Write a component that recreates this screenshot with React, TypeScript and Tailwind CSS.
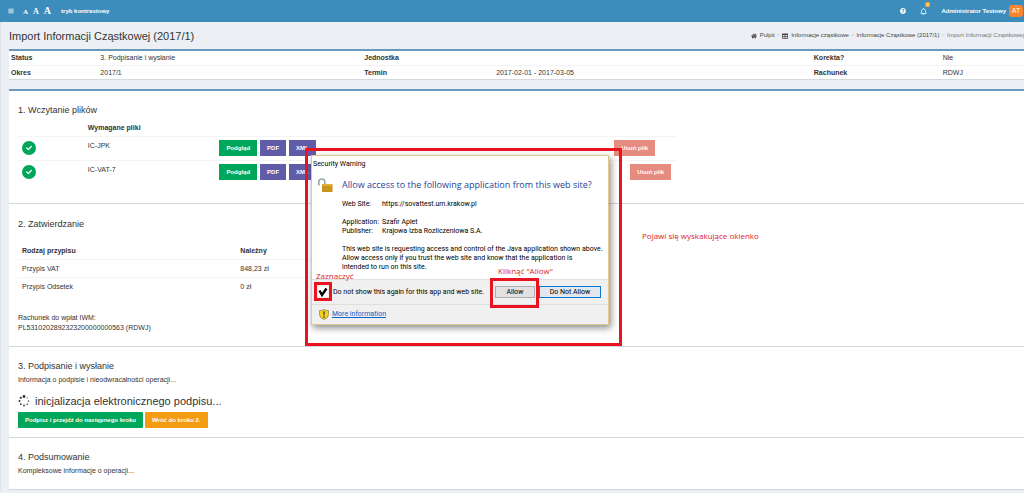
import type { ReactNode } from "react";
import { FaBars, FaCheck, FaHome, FaQuestionCircle, FaRegBell, FaTable } from "react-icons/fa";

const summary = [
   ["Status", "3. Podpisanie i wysłanie", "Jednostka", "", "Korekta?", "Nie"],
   ["Okres", "2017/1", "Termin", "2017-02-01 - 2017-03-05", "Rachunek", "RDWJ"],
];

const files = [
   { name: "IC-JPK", remove: "pl-1" },
   { name: "IC-VAT-7", remove: "pl-5" },
];

const charges = [
   { name: "Przypis VAT", amount: "848,23 zł" },
   { name: "Przypis Odsetek", amount: "0 zł" },
];

const Header = () => (
   <header className="flex h-[22px] items-center justify-between bg-[#3c8dbc] pr-[1px] pl-2 text-[6px] font-bold text-white">
      <div className="flex items-center">
         <button aria-label="Menu">
            <FaBars className="size-[6px]" />
         </button>
         <div className="ml-[9px] flex items-baseline gap-[5px] font-['Liberation_Serif',serif]">
            <button className="text-[7px] leading-[12px]">A</button>
            <button className="text-[8px] leading-[12px]">A</button>
            <button className="text-[10px] leading-[12px]">A</button>
         </div>
         <a href="#" className="ml-[10px]">
            tryb kontrastowy
         </a>
      </div>

      <div className="flex items-center">
         <button aria-label="Pomoc">
            <FaQuestionCircle className="size-[6px]" />
         </button>
         <button aria-label="Powiadomienia" className="relative ml-[14px]">
            <FaRegBell className="size-[7px]" />
            <span className="absolute -top-[6px] left-[5px] h-[5px] w-[5px] rounded-[1px] bg-[#f39c12] text-center text-[4px] leading-[5px]">
               6
            </span>
         </button>
         <a href="#" className="ml-[14px] flex items-center gap-[3px]">
            Administrator Testowy
            <span className="h-3 w-[14px] rounded-[3px] bg-[#f9842c] text-center text-[7px] leading-3 font-normal">AT</span>
         </a>
      </div>
   </header>
);

const Breadcrumb = () => (
   <nav className="flex items-center text-[6px] whitespace-nowrap text-[#444]">
      <a href="#" className="flex items-center gap-[3px]">
         <FaHome className="size-[6px]" /> Pulpit
      </a>
      <span className="px-[2px] text-[#ccc]">&gt;</span>
      <a href="#" className="flex items-center gap-[3px]">
         <FaTable className="size-[6px]" /> Informacje cząstkowe
      </a>
      <span className="px-[2px] text-[#ccc]">&gt;</span>
      <a href="#">Informacje Cząstkowe (2017/1)</a>
      <span className="px-[2px] text-[#ccc]">&gt;</span>
      <span className="text-[#777]">Import Informacji Cząstkowej</span>
   </nav>
);

const Button = ({ color, children }: { color: string; children: ReactNode }) => (
   <button className={`h-4 px-[7px] text-[6px] leading-4 font-bold text-white ${color}`}>{children}</button>
);

const Section = ({ title, className, children }: { title: string; className: string; children: ReactNode }) => (
   <section className={`px-[9px] ${className}`}>
      <h2 className="text-[9px] leading-[10px]">{title}</h2>
      {children}
   </section>
);

const Spinner = () => (
   <svg viewBox="0 0 12 12" className="size-3" fill="#333">
      <circle cx="6" cy="1.5" r="1.4" />
      <circle cx="9.2" cy="2.8" r="0.6" />
      <circle cx="10.5" cy="6" r="0.7" />
      <circle cx="9.2" cy="9.2" r="0.8" />
      <circle cx="6" cy="10.5" r="0.9" />
      <circle cx="2.8" cy="9.2" r="0.9" />
      <circle cx="1.5" cy="6" r="1" />
      <circle cx="2.8" cy="2.8" r="1.1" />
   </svg>
);

const Padlock = () => (
   <svg viewBox="0 0 16 16" className="h-4 w-4 shrink-0">
      <path d="M1.8 7.500V4a3 3 0 0 1 6 0V7" fill="none" stroke="#8fa9a4" strokeWidth="1.6" />
      <rect x="5" y="6" width="10.5" height="8" fill="#c8961a" />
      <rect x="5" y="6" width="10.5" height="2" fill="#dcb23c" />
   </svg>
);

const Shield = () => (
   <svg viewBox="0 0 10 11" className="h-[11px] w-[10px]">
      <path d="M.5 1.5Q3 1.8 5 .5 7 1.8 9.5 1.5V5.5Q9.5 9 5 10.5.5 9 .5 5.5Z" fill="#f5d11c" stroke="#8d8d70" strokeWidth=".8" />
      <path d="M4.300 2.500h1.400L5.400 6.500h-.8Z" fill="#222" />
      <circle cx="5" cy="8" r=".8" fill="#222" />
   </svg>
);

const SecurityDialog = () => (
   <div
      role="dialog"
      aria-labelledby="dialog-title"
      className="w-[298px] border border-[#e3c58e] bg-white font-[Roboto,sans-serif] text-[7px] leading-[9px] text-black shadow-[2px_3px_7px_rgba(0,0,0,0.45)]"
   >
      <div className="px-[1px] pt-1">Security Warning</div>
      <div className="flex h-[110px] gap-[9px] pt-[9px] pl-[5px]">
         <Padlock />
         <div>
            <h3
               id="dialog-title"
               className="font-['Open_Sans',sans-serif] text-[9px] leading-[14px] whitespace-nowrap text-[#1f3f97]"
            >
               Allow access to the following application from this web site?
            </h3>
            <dl className="mt-2 grid grid-cols-[40px_1fr]">
               <dt>Web Site:</dt>
               <dd className="mb-[9px]">https://sovattest.um.krakow.pl</dd>
               <dt>Application:</dt>
               <dd>Szafir Aplet</dd>
               <dt>Publisher:</dt>
               <dd>Krajowa Izba Rozliczeniowa S.A.</dd>
            </dl>
            <p className="mt-[9px] whitespace-nowrap">
               This web site is requesting access and control of the Java application shown above.
               <br />
               Allow access only if you trust the web site and know that the application is
               <br />
               intended to run on this site.
            </p>
         </div>
      </div>
      <div className="bg-[#f0f0f0]">
         <div className="flex h-[26px] items-center border-y border-[#dfdfdf] pr-[7px] pl-[6px]">
            <label className="flex flex-1 items-center gap-[5px] whitespace-nowrap">
               <span className="grid size-[10px] bg-white">
                  <input type="checkbox" defaultChecked className="peer col-start-1 row-start-1 size-[10px] appearance-none" />
                  <svg viewBox="0 0 10 10" className="pointer-events-none col-start-1 row-start-1 hidden size-[10px] peer-checked:block">
                     <path d="M1.5 3.5 4 8 8.5 1.5" fill="none" stroke="#000" strokeWidth="2.4" />
                  </svg>
               </span>
               Do not show this again for this app and web site.
            </label>
            <button className="mr-1 h-3 w-10 border border-[#adadad] bg-[#e1e1e1] leading-[10px]">Allow</button>
            <button className="h-3 w-[62px] border border-[#0078d7] bg-[#e3e7ec] leading-[10px]">Do Not Allow</button>
         </div>
         <div className="flex h-[19px] items-center gap-[3px] pl-[7px]">
            <Shield />
            <a href="#" className="text-[#0066cc] underline">
               More information
            </a>
         </div>
      </div>
   </div>
);

const Annotations = () => (
   <div className="font-['Open_Sans',sans-serif] text-[8px] leading-[9px] whitespace-nowrap text-[#e0202c]">
      <div className="absolute top-[148px] left-[305px] border-[3px] border-[#e81420] pt-1 pr-[10px] pb-[18px] pl-[3px]">
         <SecurityDialog />
      </div>
      <span className="absolute top-[271px] left-[316px]">Zaznaczyć</span>
      <span className="absolute top-[266px] left-[498px]">Kliknąć "Allow"</span>
      <div className="pointer-events-none absolute top-[282px] left-[314px] h-[19px] w-[18px] border-[3px] border-[#e81420]" />
      <div className="pointer-events-none absolute top-[278px] left-[490px] h-[30px] w-[49px] border-[3px] border-[#e81420]" />
      <span className="absolute top-[231px] left-[642px]">Pojawi się wyskakujące okienko</span>
   </div>
);

const App = () => {
   return (
      <div className="relative min-h-screen overflow-hidden bg-[#ecf0f5] font-['Liberation_Sans',Arial,sans-serif] text-[7px] leading-[9px] text-[#333]">
         <Header />

         <main className="border-l border-[#dde3e9] pl-2">
            <div className="flex h-[27px] items-center justify-between">
               <h1 className="text-[11px] leading-3">Import Informacji Cząstkowej (2017/1)</h1>
               <Breadcrumb />
            </div>

            <div className="border-t-2 border-b border-t-[#6699bb] border-b-[#d5dade] bg-white">
               <table className="w-full table-fixed text-left">
                  <tbody>
                     {summary.map((row) => (
                        <tr key={row[0]} className="h-[14px] border-b border-[#f4f4f4] last:border-0">
                           <th className="w-[9%] pl-[2px]">{row[0]}</th>
                           <td className="w-[26%]">{row[1]}</td>
                           <th className="w-[13%]">{row[2]}</th>
                           <td className="w-[31%]">{row[3]}</td>
                           <th className="w-[13%] pl-[3px]">{row[4]}</th>
                           <td>{row[5]}</td>
                        </tr>
                     ))}
                  </tbody>
               </table>
            </div>

            <div className="mt-[9px] divide-y divide-[#d2d6de] border-t-2 border-b border-t-[#6699bb] border-b-[#d2d6de] bg-white">
               <Section title="1. Wczytanie plików" className="pt-[14px] pb-[19px]">
                  <table className="mt-[4px] w-[66%] table-fixed text-left">
                     <thead>
                        <tr className="h-[17px]">
                           <th className="w-[10%]" aria-label="Stan" />
                           <th className="w-[20%] pl-1">Wymagane pliki</th>
                           <th className="w-[60%]" />
                           <th />
                        </tr>
                     </thead>
                     <tbody>
                        {files.map((file) => (
                           <tr key={file.name} className="h-6 border-t border-[#f4f4f4]">
                              <td className="pl-1">
                                 <span className="flex size-[14px] items-center justify-center rounded-full bg-[#00a65a] text-white">
                                    <FaCheck className="size-[6px]" />
                                 </span>
                              </td>
                              <td className="pt-1 pl-1 align-top">{file.name}</td>
                              <td>
                                 <div className="flex gap-[3px] pl-1">
                                    <Button color="bg-[#00a65a]">Podgląd</Button>
                                    <Button color="bg-[#605ca8]">PDF</Button>
                                    <Button color="bg-[#605ca8]">XML</Button>
                                 </div>
                              </td>
                              <td className={`whitespace-nowrap ${file.remove}`}>
                                 <Button color="bg-[#e78a80]">Usuń plik</Button>
                              </td>
                           </tr>
                        ))}
                     </tbody>
                  </table>
               </Section>

               <Section title="2. Zatwierdzanie" className="pt-[15px] pb-[13px]">
                  <table className="mt-[13px] w-1/2 table-fixed text-left">
                     <thead>
                        <tr className="h-[17px]">
                           <th className="w-[44%] pl-1">Rodzaj przypisu</th>
                           <th className="pl-[3px]">Należny</th>
                        </tr>
                     </thead>
                     <tbody>
                        {charges.map((charge) => (
                           <tr key={charge.name} className="h-[18px] border-t border-[#f4f4f4]">
                              <td className="pl-1">{charge.name}</td>
                              <td className="pl-[3px]">{charge.amount}</td>
                           </tr>
                        ))}
                     </tbody>
                  </table>
                  <p className="mt-[18px] leading-[10px]">
                     Rachunek do wpłat IWM:
                     <br />
                     PL5310202892323200000000563 (RDWJ)
                  </p>
               </Section>

               <Section title="3. Podpisanie i wysłanie" className="pt-[14px] pb-[9px]">
                  <p className="mt-1">Informacja o podpisie i nieodwracalności operacji...</p>
                  <div className="mt-[11px] flex items-center gap-[5px] text-[11px] leading-3">
                     <Spinner />
                     inicjalizacja elektronicznego podpisu...
                  </div>
                  <div className="mt-[5px] flex gap-[2px]">
                     <Button color="rounded-[1px] bg-[#00a65a]">Podpisz i przejdź do następnego kroku</Button>
                     <Button color="rounded-[1px] bg-[#f39c12]">Wróć do kroku 2.</Button>
                  </div>
               </Section>

               <Section title="4. Podsumowanie" className="pt-[14px] pb-[14px]">
                  <p className="mt-1">Kompleksowe informacje o operacji...</p>
               </Section>
            </div>
         </main>

         <Annotations />
      </div>
   );
};

export default App;
